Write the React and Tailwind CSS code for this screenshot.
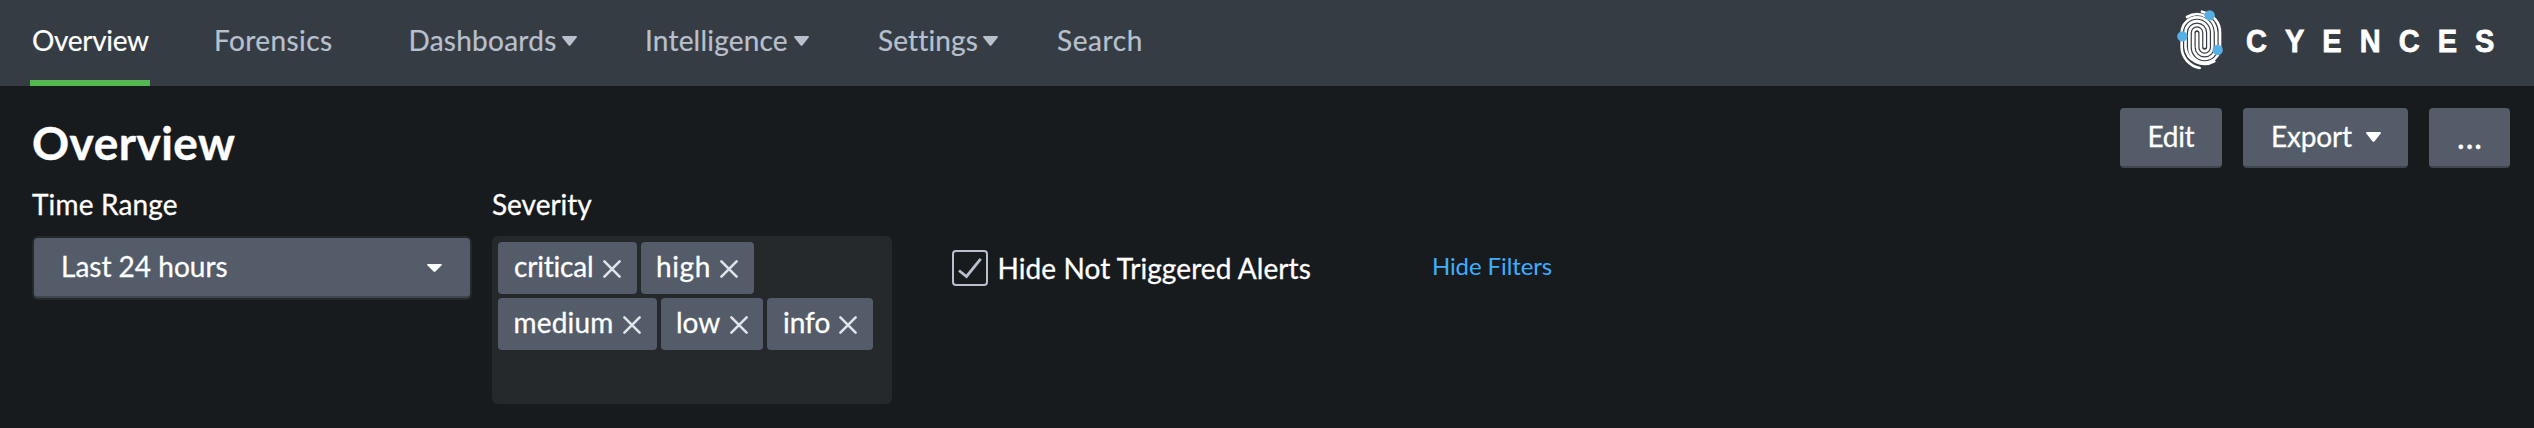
import React from "react";

function Caret({ className, w = 15, h = 10 }) {
  return (
    <svg className={className} width={w} height={h} viewBox="0 0 15 10" preserveAspectRatio="none" fill="currentColor" aria-hidden="true">
      <path d="M1 0h13c.9 0 1.3.9.7 1.6L8.4 9.4c-.5.6-1.3.6-1.8 0L.3 1.6C-.3.9.1 0 1 0z" />
    </svg>
  );
}

function NavItem({ label, className, caret }) {
  return (
    <a className={"flex h-[86px] shrink-0 pt-[23px] leading-[34px] whitespace-nowrap " + className}>
      <span>{label}</span>
      {caret && <Caret className={"mt-[13px] " + caret} />}
    </a>
  );
}

function Fingerprint() {
  return (
    <svg width="48" height="64" viewBox="45 20 144 192" fill="none" aria-hidden="true">
      <g stroke="#fff" strokeWidth="7.9" strokeLinecap="round">
        <path d="M108 99V141A23 23 0 0 0 154 141V97A46 46 0 0 0 62 97V141A69 64 0 0 0 116 203" />
        <path d="M96.5 141V97A11.5 11.5 0 0 1 119.5 97V141A11.5 11.5 0 0 0 142.5 141V97A34.5 34.5 0 0 0 73.5 97V141A57.5 53 0 0 0 160 183" />
        <path d="M96.5 141A34.5 34.5 0 0 0 165.5 141V97A57.5 57 0 0 0 78 50" />
        <path d="M131 139V97A23 23 0 0 0 85 97V141A46 46 0 0 0 177 141V97A69 63 0 0 0 123 34" />
      </g>
      <g fill="#56b0e6">
        <circle cx="146" cy="45" r="15.5" />
        <circle cx="64" cy="108" r="15.5" />
        <circle cx="170" cy="149" r="15.5" />
      </g>
    </svg>
  );
}

function Chip({ label, className }) {
  return (
    <div className={"flex h-[52px] items-start justify-between rounded-[4px] bg-[#535c68] pt-[7px] leading-[34px] " + className}>
      <span>{label}</span>
      <svg className="mt-[11px] shrink-0" width="18" height="18" viewBox="0 0 18 18" fill="none" stroke="#dfe3ea" strokeWidth="2.6" strokeLinecap="round" aria-hidden="true">
        <path d="M1.4 1.4l15.2 15.2M16.6 1.4L1.4 16.6" />
      </svg>
    </div>
  );
}

const button = "flex h-[60px] shrink-0 rounded-[4px] border-b-2 border-[#3e464f] bg-[#535c68] pt-[11px] leading-[34px]";

export default function App() {
  return (
    <div className="h-[428px] w-full overflow-hidden bg-[#181b1e] font-['Lato',sans-serif] text-[28px] text-white">
      <header className="flex h-[86px] justify-between bg-[#363c44]">
        <nav className="flex pl-[30px] text-[#b8c0ce] [-webkit-text-stroke:0.2px_currentColor]">
          <NavItem label="Overview" className="w-[120px] border-b-[6px] border-[#53b84f] pl-[2px] tracking-[-0.3px] text-white" />
          <NavItem label="Forensics" className="ml-[64px] w-[194.5px] tracking-[0.4px]" />
          <NavItem label="Dashboards" className="w-[236.5px] tracking-[0.25px]" caret="ml-[5.5px]" />
          <NavItem label="Intelligence" className="w-[233px] tracking-[0.2px]" caret="ml-[6px]" />
          <NavItem label="Settings" className="w-[179px] tracking-[0.15px]" caret="ml-[5px]" />
          <NavItem label="Search" className="tracking-[0.6px]" />
        </nav>
        <div className="flex pr-[22px]">
          <div className="mt-[6.5px]">
            <Fingerprint />
          </div>
          <span className="mt-[25px] ml-[22px] w-[266.5px] origin-left scale-x-[0.935] font-['Liberation_Sans',sans-serif] text-[31px] leading-[34px] font-bold tracking-[19.3px] whitespace-nowrap [-webkit-text-stroke:0.8px_white]">CYENCES</span>
        </div>
      </header>

      <div className="flex h-[100px] justify-between pr-[24px] pl-[32px]">
        <h1 className="pt-[29px] text-[46px] leading-[55px] font-bold tracking-[0.5px] [-webkit-text-stroke:0.4px_white]">Overview</h1>
        <div className="flex gap-[21px] pt-[22px] [-webkit-text-stroke:0.3px_white]">
          <div className={button + " w-[102px] pl-[27.5px] tracking-[-0.3px]"}>Edit</div>
          <div className={button + " w-[165px] pl-[28px] tracking-[-0.2px]"}>
            Export
            <Caret className="mt-[13px] ml-[14.5px]" />
          </div>
          <div className={button + " w-[81px] justify-center"}>
            <span className="mt-[2px] -mr-[2px] font-bold tracking-[2px]">...</span>
          </div>
        </div>
      </div>

      <div className="flex items-start pl-[32px] leading-[34px] [-webkit-text-stroke:0.3px_white]">
        <div className="w-[440px]">
          <div className="h-[50px] pt-px tracking-[0.15px]">Time Range</div>
          <div className="rounded-[6px] bg-[#26292c] p-[2px]">
            <div className="flex h-[60px] justify-between rounded-[4px] border-b-2 border-[#3e464f] bg-[#535c68] pt-[11px] pr-[28px] pl-[27px]">
              <span>Last 24 hours</span>
              <Caret className="mt-[15px]" w={15} h={8} />
            </div>
          </div>
        </div>

        <div className="ml-[20px] w-[400px]">
          <div className="h-[50px] pt-px">Severity</div>
          <div className="flex h-[168px] flex-wrap content-start gap-[4px] rounded-[6px] bg-[#26292c] p-[6px]">
            <Chip label="critical" className="w-[139px] pr-[16px] pl-[16px] tracking-[-0.2px]" />
            <Chip label="high" className="w-[113px] pr-[16px] pl-[15px] tracking-[0.6px]" />
            <Chip label="medium" className="w-[159px] pr-[16px] pl-[15.5px] tracking-[0.2px]" />
            <Chip label="low" className="w-[102px] pr-[15.5px] pl-[15px]" />
            <Chip label="info" className="w-[106px] pr-[16px] pl-[16px]" />
          </div>
        </div>

        <label className="ml-[60px] flex pt-[64px]">
          <svg width="36" height="36" viewBox="0 0 36 36" fill="none" stroke="#b8c0ce" aria-hidden="true">
            <rect x="1" y="1" width="34" height="34" rx="3" strokeWidth="2" />
            <path d="M7 20.5l7.5 6L28.7 8.8" strokeWidth="2.8" />
          </svg>
          <span className="ml-[9.5px] pt-px tracking-[0.08px]">Hide Not Triggered Alerts</span>
        </label>

        <a className="ml-[121px] pt-[65px] text-[24px] leading-[29px] tracking-[-0.1px] text-[#3daeff] [-webkit-text-stroke:0px]">Hide Filters</a>
      </div>
    </div>
  );
}
